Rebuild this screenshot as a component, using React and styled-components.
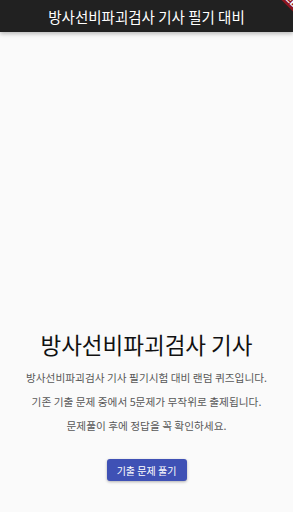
import React from 'react';
import styled, {createGlobalStyle} from 'styled-components';

const GlobalStyle = createGlobalStyle`
  html, body {
    margin: 0;
    padding: 0;
    background: #fafafa;
  }
  body {
    font-family: "Noto Sans CJK KR", "Noto Sans", sans-serif;
  }
`;

const Screen = styled.div`
  position: relative;
  width: 293px;
  height: 512px;
  display: flex;
  flex-direction: column;
  background: #fafafa;
  overflow: hidden;
`;

const AppBar = styled.header`
  height: 32px;
  flex-shrink: 0;
  display: flex;
  align-items: center;
  justify-content: center;
  background: #212121;
  color: #fff;
  font-size: 14.5px;
  box-shadow: 0 2px 4px rgba(0, 0, 0, 0.25);
  z-index: 1;
`;

const Body = styled.main`
  flex: 1;
  display: flex;
  flex-direction: column;
  align-items: center;
  justify-content: flex-end;
  padding-bottom: 31px;
`;

const Title = styled.h1`
  margin: 0 0 6px;
  font-size: 22.5px;
  font-weight: 400;
  color: #111;
  line-height: 32px;
`;

const Line = styled.p`
  margin: 0;
  font-size: 10.7px;
  line-height: 24px;
  color: #585858;
`;

const Button = styled.button`
  margin-top: 21px;
  width: 80px;
  height: 22px;
  padding: 0;
  border: none;
  border-radius: 3px;
  background: #3f51b5;
  color: #fff;
  font-family: inherit;
  font-size: 10px;
  box-shadow: 0 1px 3px rgba(0, 0, 0, 0.3);
  cursor: pointer;
`;

const Banner = styled.div`
  position: absolute;
  top: -2px;
  right: -31px;
  width: 60px;
  height: 12px;
  display: flex;
  align-items: center;
  justify-content: center;
  background: rgba(160, 20, 30, 0.85);
  color: #fff;
  font-size: 9px;
  font-weight: 700;
  font-family: "Liberation Sans", sans-serif;
  transform: rotate(45deg);
  z-index: 2;
`;

export default function App() {
    return (
        <Screen>
            <GlobalStyle/>
            <AppBar>방사선비파괴검사 기사 필기 대비</AppBar>
            <Body>
                <Title>방사선비파괴검사 기사</Title>
                <Line>방사선비파괴검사 기사 필기시험 대비 랜덤 퀴즈입니다.</Line>
                <Line>기존 기출 문제 중에서 5문제가 무작위로 출제됩니다.</Line>
                <Line>문제풀이 후에 정답을 꼭 확인하세요.</Line>
                <Button>기출 문제 풀기</Button>
            </Body>
            <Banner>DEBUG</Banner>
        </Screen>
    );
}
